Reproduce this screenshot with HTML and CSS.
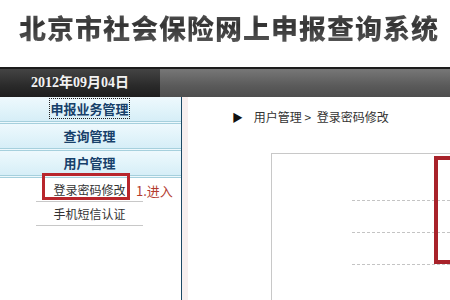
FILE: index.html
```html
<!DOCTYPE html>
<html lang="zh-CN">
<head>
    <meta charset="UTF-8">
    <title>北京市社会保险网上申报查询系统</title>
    <link rel="stylesheet" href="styles.css">
</head>
<body>

    <div class="header">
        <h1 class="title">北京市社会保险网上申报查询系统</h1>
    </div>

    <div class="topbar">
        <div class="date">2012年09月04日</div>
        <div class="bar-rest"></div>
    </div>

    <div class="main">
        <div class="sidebar">
            <div class="menu-item"><span class="focus">申报业务管理</span></div>
            <div class="menu-item">查询管理</div>
            <div class="menu-item">用户管理</div>
            <div class="sub-item">登录密码修改</div>
            <div class="sub-item">手机短信认证</div>

            <div class="mark-box"></div>
            <div class="mark-text">1.进入</div>
        </div>
        <div class="stripe"></div>
        <div class="content">
            <div class="crumb">
                <span class="arrow">▶</span>
                <span>用户管理 &gt;</span>
                <span class="crumb-last">登录密码修改</span>
            </div>
            <div class="form-box">
                <div class="dash-line"></div>
                <div class="dash-line"></div>
                <div class="dash-line"></div>
                <div class="red-box"></div>
            </div>
        </div>
    </div>

</body>
</html>
```

FILE: styles.css
```css
body {
    margin: 0;
    width: 450px;
    height: 300px;
    overflow: hidden;
    background: #fff;
    font-family: "Noto Sans CJK SC", "Liberation Sans", sans-serif;
}
.header {
    height: 67px;
    padding-left: 19px;
    box-sizing: border-box;
}
.title {
    margin: 0;
    padding-top: 11px;
    font-size: 27px;
    font-weight: 900;
    letter-spacing: 1px;
    line-height: 34px;
    background: linear-gradient(#7a7a7a, #333 55%, #5a5a5a);
    -webkit-background-clip: text;
    background-clip: text;
    color: transparent;
}
.topbar {
    display: flex;
    height: 30px;
    border-top: 2px solid #1c1c1c;
    box-sizing: border-box;
}
.date {
    width: 160px;
    background: linear-gradient(#444, #2a2a2a 60%, #1e1e1e);
    color: #f2f2f2;
    font-family: "Liberation Serif", "Noto Sans CJK SC", serif;
    font-weight: bold;
    font-size: 14px;
    line-height: 28px;
    text-align: center;
}
.bar-rest {
    flex: 1;
    background: linear-gradient(#777, #5a5a5a 60%, #4e4e4e);
}
.main {
    display: flex;
    height: 203px;
    overflow: hidden;
}
.sidebar {
    position: relative;
    width: 181px;
    border-right: 1px solid #1d4a66;
}
.menu-item {
    height: 24px;
    line-height: 24px;
    text-align: center;
    font-size: 13px;
    font-weight: bold;
    color: #17406a;
    background: linear-gradient(#eef9fd, #d6eef7);
    border-bottom: 3px double #a6d0dd;
    padding-right: 2px;
}
.focus {
    outline: 1px dotted #222;
}
.sub-item {
    width: 107px;
    margin-left: 36px;
    height: 23px;
    line-height: 23px;
    text-align: center;
    font-size: 12px;
    color: #333;
    border-bottom: 1px solid #c8c8c8;
}
.mark-box {
    position: absolute;
    left: 42px;
    top: 76px;
    width: 82px;
    height: 21px;
    border: 3px solid #b8262c;
}
.mark-text {
    position: absolute;
    left: 136px;
    top: 84px;
    font-size: 13px;
    color: #b33a2e;
}
.stripe {
    width: 6px;
    background: #f7efef;
}
.content {
    flex: 1;
    position: relative;
    overflow: hidden;
}
.crumb {
    padding: 10px 0 0 44px;
    font-size: 12px;
    color: #333;
    line-height: 20px;
}
.arrow {
    font-size: 11px;
    color: #111;
    margin-right: 8px;
}
.crumb-last {
    margin-left: 3px;
}
.form-box {
    position: relative;
    margin: 26px 0 0 83px;
    height: 160px;
    border-top: 1px solid #c8c8c8;
    border-left: 1px solid #c8c8c8;
    padding-top: 46px;
}
.dash-line {
    margin-left: 80px;
    height: 31px;
    border-top: 1px dashed #c4c4c4;
}
.red-box {
    position: absolute;
    left: 162px;
    top: 2px;
    width: 40px;
    height: 100px;
    border: 4px solid #a8222a;
}
```
